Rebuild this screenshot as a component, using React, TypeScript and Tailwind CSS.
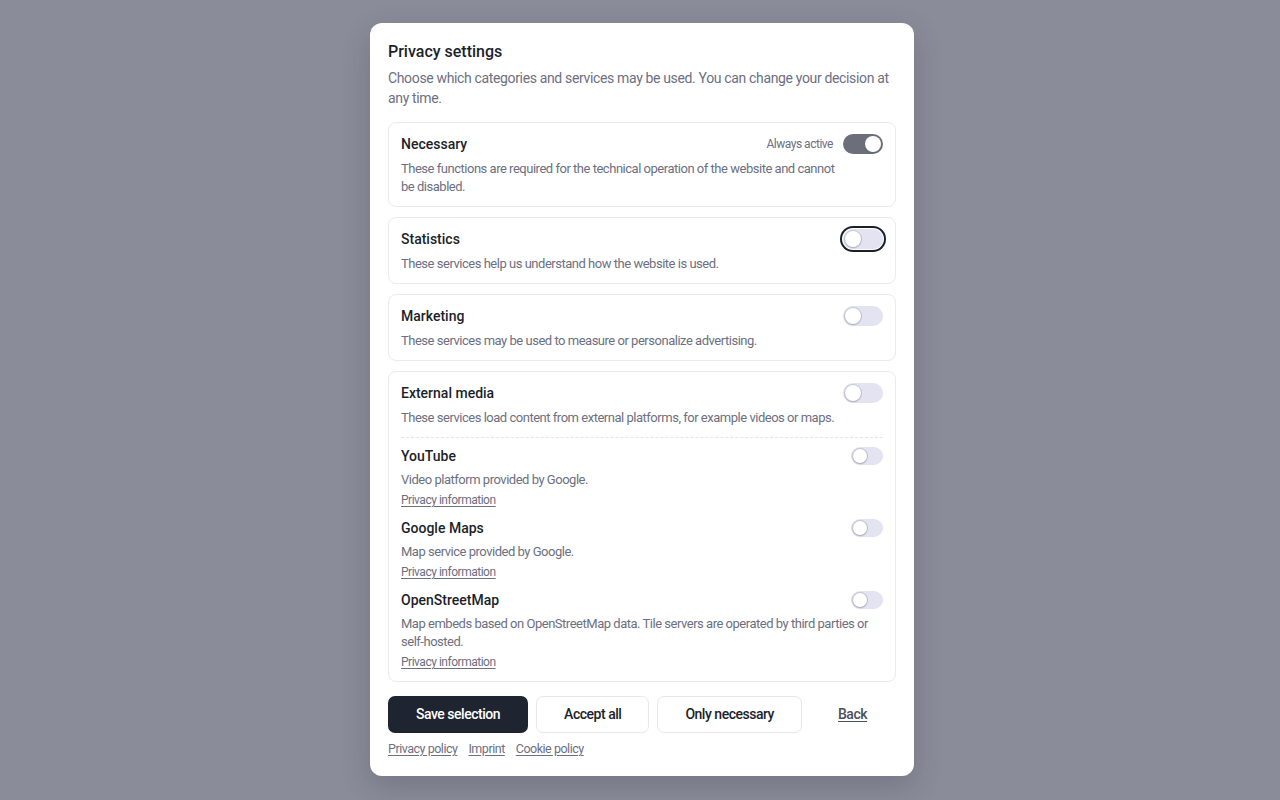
import React from 'react'

type ToggleProps = {
  on?: boolean
  focused?: boolean
  small?: boolean
}

function Toggle({ on = false, focused = false, small = false }: ToggleProps) {
  const track = small ? 'h-[18px] w-[32px]' : 'h-[20px] w-[40px]'
  const knob = small ? 'h-[14px] w-[14px] top-[2px]' : 'h-[16px] w-[16px] top-[2px]'
  const knobPos = on ? (small ? 'left-[16px]' : 'left-[22px]') : 'left-[2px]'
  return (
    <span
      className={`relative inline-block shrink-0 rounded-full ${track} ${on ? 'bg-[#6c6f7b]' : 'bg-[#e3e3f1]'} ${
        focused ? 'ring-2 ring-[#1c1f2b] ring-offset-1 ring-offset-white' : ''
      }`}
    >
      <span
        className={`absolute rounded-full bg-white shadow-[0_0_0_1px_rgba(120,120,140,0.25),0_1px_2px_rgba(60,60,80,0.25)] ${knob} ${knobPos}`}
      />
    </span>
  )
}

type Service = {
  name: string
  desc: string
}

const services: Service[] = [
  { name: 'YouTube', desc: 'Video platform provided by Google.' },
  { name: 'Google Maps', desc: 'Map service provided by Google.' },
  {
    name: 'OpenStreetMap',
    desc: 'Map embeds based on OpenStreetMap data. Tile servers are operated by third parties or self-hosted.',
  },
]

function Card({ children }: { children: React.ReactNode }) {
  return <div className="rounded-[8px] border border-[#e9e9f3] px-3 pb-[10px] pt-[11px]">{ children }</div>
}

function CategoryHead({ title, right }: { title: string; right: React.ReactNode }) {
  return (
    <div className="flex h-5 items-center justify-between">
      <h3 className="text-[14px] font-medium leading-5 tracking-normal text-[#1c1f2b]">{ title }</h3>
      { right }
    </div>
  )
}

function Desc({ children }: { children: React.ReactNode }) {
  return <p className="mt-1.5 pr-10 text-[13px] leading-[18px] text-[#6d6f82]">{ children }</p>
}

export default function App() {
  return (
    <div
      className="flex min-h-screen items-start justify-center bg-[#8a8c99] pl-1 pt-[23px] tracking-[-0.03em]"
      style={ { fontFamily: 'Roboto, "Noto Sans", sans-serif' } }
    >
      <div className="w-[544px] rounded-[12px] bg-white px-[18px] pb-[18px] pt-[17px] shadow-[0_10px_30px_rgba(30,30,50,0.2)]">
        <h2 className="text-[16px] font-medium leading-6 tracking-normal text-[#1c1f2b]">Privacy settings</h2>
        <p className="mt-[4px] text-[14px] leading-5 tracking-[-0.025em] text-[#6d6f82]">
          Choose which categories and services may be used. You can change your decision at any time.
        </p>

        <div className="mt-[14px] flex flex-col gap-[10px]">
          <Card>
            <CategoryHead
              title="Necessary"
              right={
                <div className="flex items-center gap-[10px]">
                  <span className="text-[12px] text-[#6d6f82]">Always active</span>
                  <Toggle on />
                </div>
              }
            />
            <Desc>These functions are required for the technical operation of the website and cannot be disabled.</Desc>
          </Card>

          <Card>
            <CategoryHead title="Statistics" right={ <Toggle focused /> } />
            <Desc>These services help us understand how the website is used.</Desc>
          </Card>

          <Card>
            <CategoryHead title="Marketing" right={ <Toggle /> } />
            <Desc>These services may be used to measure or personalize advertising.</Desc>
          </Card>

          <Card>
            <CategoryHead title="External media" right={ <Toggle /> } />
            <Desc>These services load content from external platforms, for example videos or maps.</Desc>
            <div className="mt-[10px] flex flex-col gap-[9px] border-t border-dashed border-[#e4e4ef] pt-[8px]">
              { services.map((s) => (
                <div key={ s.name }>
                  <CategoryHead title={ s.name } right={ <Toggle small /> } />
                  <p className="mt-[5px] text-[13px] leading-[18px] text-[#6d6f82]">{ s.desc }</p>
                  <a href="#" className="mt-[2px] block w-fit text-[12px] leading-[18px] text-[#6d6f82] underline underline-offset-2">
                    Privacy information
                  </a>
                </div>
              )) }
            </div>
          </Card>
        </div>

        <div className="mt-[14px] flex items-center gap-2">
          <button className="h-[37px] whitespace-nowrap rounded-[7px] bg-[#1f2431] px-7 text-[14px] font-medium text-white">
            Save selection
          </button>
          <button className="h-[37px] whitespace-nowrap rounded-[7px] border border-[#e6e6f0] bg-white px-[27px] text-[14px] font-medium text-[#1c1f2b]">
            Accept all
          </button>
          <button className="h-[37px] whitespace-nowrap rounded-[7px] border border-[#e6e6f0] bg-white px-[27px] text-[14px] font-medium text-[#1c1f2b]">
            Only necessary
          </button>
          <button className="h-[37px] whitespace-nowrap px-7 text-[14px] font-medium text-[#4c4f60] underline underline-offset-2">
            Back
          </button>
        </div>

        <div className="mt-[7px] flex gap-[11px] text-[12.5px] leading-[18px] text-[#6d6f82]">
          <a href="#" className="underline underline-offset-2">Privacy policy</a>
          <a href="#" className="underline underline-offset-2">Imprint</a>
          <a href="#" className="underline underline-offset-2">Cookie policy</a>
        </div>
      </div>
    </div>
  )
}
